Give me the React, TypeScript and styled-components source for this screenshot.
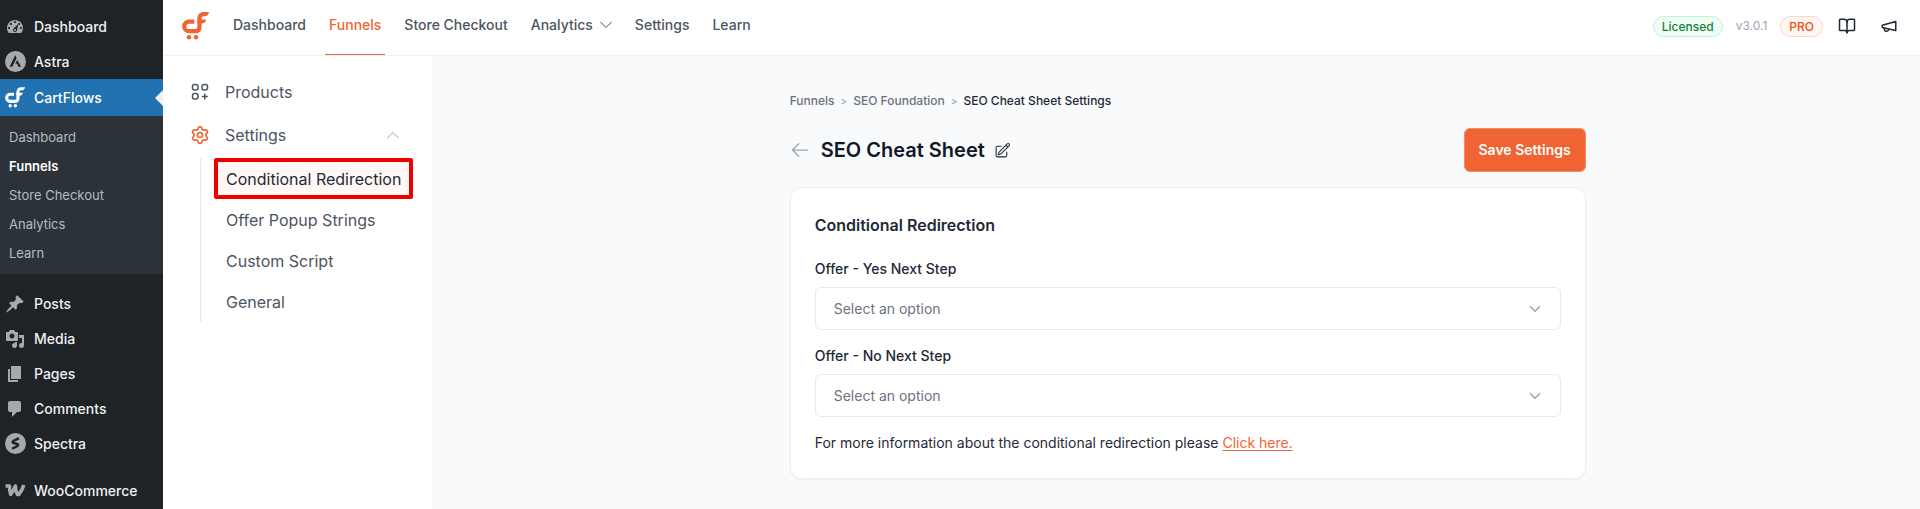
import React from 'react';
import styled, { createGlobalStyle } from 'styled-components';
import { BookOpen, ChevronDown, Settings } from 'lucide-react';
import { HiOutlineArrowLeft, HiOutlinePencilSquare } from 'react-icons/hi2';

const GlobalStyle = createGlobalStyle`
  *, *::before, *::after { box-sizing: border-box; }
  body {
    margin: 0;
    background: #f9fafb;
    color: #1f2937;
    font-family: Inter, "Liberation Sans", sans-serif;
    font-size: 14px;
    line-height: 20px;
  }
  a { color: inherit; text-decoration: none; }
  ul, ol { list-style: none; margin: 0; padding: 0; }
  h1, h2, p { margin: 0; }
  button, select { font: inherit; }
  svg { display: block; flex-shrink: 0; }
`;

const Shell = styled.div`
  display: flex;
  min-height: 100vh;
`;

/* Admin menu */

const AdminMenu = styled.nav`
  flex: 0 0 163px;
  padding-top: 9px;
  background: #1d2327;
  color: #f0f0f1;
`;

const AdminGroup = styled.ul`
  & + & { margin-top: 12px; }
`;

const AdminLink = styled.a<{ $active?: boolean }>`
  display: flex;
  align-items: center;
  gap: 8px;
  height: ${({ $active }) => ($active ? 37 : 35)}px;
  padding-left: 4px;
  position: relative;
  font-weight: 500;
  color: ${({ $active }) => ($active ? '#fff' : '#f0f0f1')};
  background: ${({ $active }) => ($active ? '#2271b1' : 'transparent')};

  &::after {
    content: '';
    display: ${({ $active }) => ($active ? 'block' : 'none')};
    position: absolute;
    right: 0;
    top: 50%;
    margin-top: -8px;
    border: 8px solid transparent;
    border-left-width: 0;
    border-right-color: #f0f0f1;
  }
`;

const AdminIcon = styled.span<{ $active?: boolean }>`
  display: flex;
  justify-content: center;
  width: 22px;
  color: ${({ $active }) => ($active ? '#fff' : '#a7aaad')};
`;

const AdminSubmenu = styled.ul`
  padding: 6px 0 7px;
  background: #2c3338;
`;

const AdminSubLink = styled.a<{ $active?: boolean }>`
  display: flex;
  align-items: center;
  height: 29px;
  padding-left: 9px;
  font-size: 13px;
  font-weight: ${({ $active }) => ($active ? 600 : 400)};
  color: ${({ $active }) => ($active ? '#fff' : '#b5bcc2')};
`;

/* App header */

const AppColumn = styled.div`
  flex: 1;
  min-width: 0;
  display: flex;
  flex-direction: column;
`;

const Header = styled.header`
  display: flex;
  align-items: flex-start;
  height: 56px;
  padding: 0 22px 0 19px;
  background: #fff;
  border-bottom: 1px solid #eef0f2;
`;

const Brand = styled.a`
  padding-top: 12px;
  color: #f06434;
`;

const TopNav = styled.nav`
  display: flex;
  gap: 15px;
  margin-left: 20px;
`;

const TopLink = styled.a<{ $active?: boolean }>`
  display: flex;
  align-items: center;
  gap: 7px;
  height: 55px;
  padding: 0 4px 4px;
  font-weight: 500;
  color: ${({ $active }) => ($active ? '#f06434' : '#4b5563')};
  border-bottom: 1px solid ${({ $active }) => ($active ? '#f06434' : 'transparent')};
`;

const Status = styled.div`
  display: flex;
  align-items: center;
  gap: 13px;
  height: 52px;
  margin-left: auto;
`;

const Pill = styled.span<{ $tone: 'green' | 'orange' }>`
  height: 21px;
  padding: 0 8px;
  border: 1px solid ${({ $tone }) => ($tone === 'green' ? '#bbf7d0' : '#fbd5c8')};
  border-radius: 11px;
  background: ${({ $tone }) => ($tone === 'green' ? '#f0fdf4' : '#fff7f3')};
  color: ${({ $tone }) => ($tone === 'green' ? '#15803d' : '#f0501a')};
  font-size: 12px;
  line-height: 19px;
  font-weight: 500;
`;

const Version = styled.span`
  font-size: 12px;
  color: #9ca3af;
`;

const HeaderActions = styled.div`
  display: flex;
  align-items: center;
  gap: 24px;
  margin-left: 2px;
`;

const IconButton = styled.button`
  display: flex;
  padding: 0;
  border: 0;
  background: none;
  color: inherit;
  cursor: pointer;
`;

/* Funnel side navigation */

const Body = styled.div`
  flex: 1;
  display: flex;
`;

const SideNav = styled.nav`
  flex: 0 0 269px;
  padding: 14px 19px 0 27px;
  background: #fff;
  font-size: 16px;
  color: #4b5563;
`;

const SideLink = styled.a<{ $accent?: boolean }>`
  display: flex;
  align-items: center;
  gap: 15px;
  height: 43px;
  padding-right: 14px;

  & > svg:first-child { color: ${({ $accent }) => ($accent ? '#f06434' : '#4b5563')}; }
  & > svg:last-child:not(:first-child) { margin-left: auto; color: #9ca3af; }
`;

const SideSublist = styled.ul`
  margin: 2px 0 0 10px;
  padding-left: 13px;
  border-left: 1px solid #e5e7eb;
`;

const SideSublink = styled.a<{ $active?: boolean }>`
  display: flex;
  align-items: center;
  height: 41px;
  padding: 0 8px;
  border: 4px solid ${({ $active }) => ($active ? '#ee0000' : 'transparent')};
  border-radius: 2px;
  background: ${({ $active }) => ($active ? '#fff8f5' : 'transparent')};
  color: ${({ $active }) => ($active ? '#1f2937' : 'inherit')};
  white-space: nowrap;
`;

/* Settings page */

const Main = styled.main`
  flex: 1;
  min-width: 0;
  padding: 35px 24px 28px 47px;
`;

const Container = styled.div`
  max-width: 796px;
  margin: 0 auto;
`;

const Crumbs = styled.ol`
  display: flex;
  gap: 6px;
  font-size: 12px;
  font-weight: 500;
  color: #6b7280;

  li { display: flex; gap: 6px; }
  li + li::before { content: '>'; font-size: 10px; color: #9ca3af; }
  [aria-current] { color: #1f2937; }
`;

const TitleBar = styled.div`
  display: flex;
  align-items: center;
  margin: 17px 0 15px;
`;

const BackLink = styled.a`
  margin-right: 11px;
  color: #9ca3af;
`;

const Title = styled.h1`
  margin-right: 9px;
  font-size: 20px;
  line-height: 28px;
  font-weight: 600;
  color: #111827;
`;

const SaveButton = styled.button`
  height: 44px;
  margin-left: auto;
  padding: 0 14px;
  border: 1px solid #f58a66;
  border-radius: 6px;
  background: #f06434;
  color: #fff;
  font-weight: 600;
  cursor: pointer;
`;

const Card = styled.section`
  padding: 25px 24px;
  border: 1px solid #eceef1;
  border-radius: 12px;
  background: #fff;
  box-shadow: 0 1px 2px rgba(0, 0, 0, 0.05);
`;

const CardTitle = styled.h2`
  margin-bottom: 22px;
  font-size: 16px;
  line-height: 24px;
  font-weight: 600;
`;

const Field = styled.div`
  margin-bottom: 16px;
`;

const Label = styled.label`
  display: block;
  margin-bottom: 8px;
  font-weight: 500;
`;

const SelectBox = styled.div`
  display: grid;
  align-items: center;

  & > * { grid-area: 1 / 1; }
  & > svg { justify-self: end; margin-right: 17px; color: #9ca3af; pointer-events: none; }
`;

const Select = styled.select`
  appearance: none;
  width: 100%;
  height: 43px;
  padding: 0 40px 0 18px;
  border: 1px solid #e8eaee;
  border-radius: 6px;
  background: #fff;
  color: #6b7280;
`;

const Note = styled.p`
  a { color: #f06434; text-decoration: underline; text-underline-offset: 2px; }
`;

const CartFlowsMark = ({ width, height }: { width: number; height: number }) => (
  <svg width={width} height={height} viewBox="0 0 27 28" fill="none" aria-hidden="true">
    <path
      d="M12.3 9.6H7A4.8 4.8 0 0 0 7 19.2h6.2c2.8 0 4.3-1.5 4.3-4.2V7.6"
      stroke="currentColor"
      strokeWidth="4.2"
    />
    <path
      d="M15.4 10.6V6.8C15.4 2.6 18 0 22.2 0H27c-.4 2.8-2 4.2-4.6 4.2h-.6c-1.5 0-2.2.8-2.2 2.2v1.2H24c-.3 2.6-1.7 4-4.4 4Z"
      fill="currentColor"
    />
    <circle cx="7" cy="25.2" r="2.3" fill="currentColor" />
    <circle cx="14" cy="25.2" r="2.3" fill="currentColor" />
  </svg>
);

const DASHICONS = {
  dashboard:
    'M3.76 16h12.48c1.1-1.37 1.76-3.11 1.76-5 0-4.42-3.58-8-8-8s-8 3.58-8 8c0 1.89.66 3.63 1.76 5zM10 4c.55 0 1 .45 1 1s-.45 1-1 1-1-.45-1-1 .45-1 1-1zM6 6c.55 0 1 .45 1 1s-.45 1-1 1-1-.45-1-1 .45-1 1-1zm8 0c.55 0 1 .45 1 1s-.45 1-1 1-1-.45-1-1 .45-1 1-1zM13.5 6.8l-1.5 6.2c0 1.1-.9 2-2 2s-2-.9-2-2c0-.6.25-1.1.63-1.45zM4 10c.55 0 1 .45 1 1s-.45 1-1 1-1-.45-1-1 .45-1 1-1zm12 0c.55 0 1 .45 1 1s-.45 1-1 1-1-.45-1-1 .45-1 1-1zm-5 3c0-.55-.45-1-1-1s-1 .45-1 1 .45 1 1 1 1-.45 1-1z',
  posts:
    'M10.44 3.02l1.82-1.82 6.36 6.35-1.83 1.82c-1.05-.68-2.48-.57-3.41.36l-.75.75c-.92.93-1.04 2.35-.35 3.41l-1.83 1.82-2.41-2.41-2.8 2.79c-.42.42-3.38 2.71-3.8 2.29s1.86-3.39 2.28-3.81l2.79-2.79L4.1 9.36l1.83-1.82c1.05.69 2.48.57 3.4-.36l.75-.75c.93-.92 1.05-2.35.36-3.41z',
  media:
    'M13 11V4c0-.55-.45-1-1-1h-1.67L9 1H5L3.67 3H2c-.55 0-1 .45-1 1v7c0 .55.45 1 1 1h10c.55 0 1-.45 1-1zM7 4.5c1.38 0 2.5 1.12 2.5 2.5S8.38 9.5 7 9.5 4.5 8.38 4.5 7 5.62 4.5 7 4.5zM14 6h5v10.5c0 1.38-1.12 2.5-2.5 2.5S14 17.88 14 16.5s1.12-2.5 2.5-2.5c.17 0 .34.02.5.05V9h-3V6zm-4 8.05V13h2v3.5c0 1.38-1.12 2.5-2.5 2.5S7 17.88 7 16.5 8.12 14 9.5 14c.17 0 .34.02.5.05z',
  pages: 'M6 15V2h10v13H6zm-1 1h8v2H3V5h2v11z',
  comments: 'M5 2h9c1.1 0 2 .9 2 2v7c0 1.1-.9 2-2 2h-2l-5 5v-5H5c-1.1 0-2-.9-2-2V4c0-1.1.9-2 2-2z',
};

const Dashicon = ({ name }: { name: keyof typeof DASHICONS }) => (
  <svg width="20" height="20" viewBox="0 0 20 20" aria-hidden="true">
    <path d={DASHICONS[name]} fill="currentColor" fillRule="evenodd" />
  </svg>
);

const AstraIcon = () => (
  <svg width="21" height="21" viewBox="0 0 20 20" aria-hidden="true">
    <circle cx="10" cy="10" r="10" fill="currentColor" />
    <path d="M9.8 3.8 4.4 15h2.5L11 6.8zM11.6 8.6 9.8 12.2h1.7l1.3 2.8h2.6z" fill="#1d2327" />
  </svg>
);

const SpectraIcon = () => (
  <svg width="21" height="21" viewBox="0 0 20 20" fill="none" aria-hidden="true">
    <circle cx="10" cy="10" r="10" fill="currentColor" />
    <path d="M13.2 5 8 7.6q-1.4.9 0 1.8l3.8 1.2q1.4.8 0 1.8l-5 2.6" stroke="#1d2327" strokeWidth="2.4" />
  </svg>
);

const WooIcon = () => (
  <svg width="21" height="13" viewBox="0 0 21 13" fill="none" aria-hidden="true">
    <path
      d="M.5 2h4q0 5 1.2 8.400Q8.600 7 10.400 2q0 5 2 8.400h1.400Q17 7 18.800 1"
      stroke="currentColor"
      strokeWidth="3.600"
      strokeLinejoin="round"
    />
  </svg>
);

const ProductsIcon = () => (
  <svg width="20" height="20" viewBox="0 0 20 20" fill="none" stroke="currentColor" strokeWidth="1.5" aria-hidden="true">
    <rect x="2.5" y="2.5" width="5.5" height="5.5" rx="2" />
    <rect x="12" y="2.5" width="5.5" height="5.5" rx="2" />
    <rect x="2.5" y="11.5" width="5.5" height="5.5" rx="2" />
    <path d="M14.8 11.5v6M11.8 14.5h6" />
  </svg>
);

const ThinChevron = ({ up }: { up?: boolean }) => (
  <svg width="12" height="8" viewBox="0 0 12 8" fill="none" stroke="currentColor" aria-hidden="true">
    <path d={up ? 'M.5 7 6 1.5 11.5 7' : 'M.5 1 6 6.5 11.5 1'} strokeLinecap="round" />
  </svg>
);

const MegaphoneIcon = () => (
  <svg
    width="18"
    height="18"
    viewBox="0 0 24 24"
    fill="none"
    stroke="currentColor"
    strokeWidth="2"
    strokeLinecap="round"
    strokeLinejoin="round"
    aria-hidden="true"
  >
    <path d="m3 11 18-5v12L3 14v-3z" />
    <path d="M11.6 16.8a3 3 0 1 1-5.8-1.6" />
  </svg>
);

const SelectField = ({ id, label }: { id: string; label: string }) => (
  <Field>
    <Label htmlFor={id}>{label}</Label>
    <SelectBox>
      <Select id={id} defaultValue="">
        <option value="">Select an option</option>
      </Select>
      <ChevronDown size={18} />
    </SelectBox>
  </Field>
);

const AdminItem = ({ icon, label }: { icon: React.ReactNode; label: string }) => (
  <li>
    <AdminLink href="#">
      <AdminIcon>{icon}</AdminIcon>
      {label}
    </AdminLink>
  </li>
);

const CARTFLOWS_PAGES = ['Dashboard', 'Funnels', 'Store Checkout', 'Analytics', 'Learn'];
const TOP_LINKS = ['Dashboard', 'Funnels', 'Store Checkout', 'Analytics', 'Settings', 'Learn'];
const SETTINGS_LINKS = ['Conditional Redirection', 'Offer Popup Strings', 'Custom Script', 'General'];

export default function App() {
  return (
    <>
      <GlobalStyle />
      <Shell>
        <AdminMenu aria-label="Admin menu">
          <AdminGroup>
            <AdminItem icon={<Dashicon name="dashboard" />} label="Dashboard" />
            <AdminItem icon={<AstraIcon />} label="Astra" />
            <li>
              <AdminLink href="#" $active>
                <AdminIcon $active>
                  <CartFlowsMark width={20} height={21} />
                </AdminIcon>
                CartFlows
              </AdminLink>
              <AdminSubmenu>
                {CARTFLOWS_PAGES.map((page) => (
                  <li key={page}>
                    <AdminSubLink href="#" $active={page === 'Funnels'}>
                      {page}
                    </AdminSubLink>
                  </li>
                ))}
              </AdminSubmenu>
            </li>
          </AdminGroup>
          <AdminGroup>
            <AdminItem icon={<Dashicon name="posts" />} label="Posts" />
            <AdminItem icon={<Dashicon name="media" />} label="Media" />
            <AdminItem icon={<Dashicon name="pages" />} label="Pages" />
            <AdminItem icon={<Dashicon name="comments" />} label="Comments" />
            <AdminItem icon={<SpectraIcon />} label="Spectra" />
          </AdminGroup>
          <AdminGroup>
            <AdminItem icon={<WooIcon />} label="WooCommerce" />
          </AdminGroup>
        </AdminMenu>

        <AppColumn>
          <Header>
            <Brand href="#" aria-label="CartFlows">
              <CartFlowsMark width={27} height={28} />
            </Brand>
            <TopNav aria-label="CartFlows">
              {TOP_LINKS.map((link) => (
                <TopLink key={link} href="#" $active={link === 'Funnels'}>
                  {link}
                  {link === 'Analytics' && <ThinChevron />}
                </TopLink>
              ))}
            </TopNav>
            <Status>
              <Pill $tone="green">Licensed</Pill>
              <Version>v3.0.1</Version>
              <Pill $tone="orange">PRO</Pill>
              <HeaderActions>
                <IconButton type="button" aria-label="Documentation">
                  <BookOpen size={18} />
                </IconButton>
                <IconButton type="button" aria-label="What's new">
                  <MegaphoneIcon />
                </IconButton>
              </HeaderActions>
            </Status>
          </Header>

          <Body>
            <SideNav aria-label="Funnel">
              <SideLink href="#">
                <ProductsIcon />
                Products
              </SideLink>
              <SideLink href="#" $accent>
                <Settings size={20} strokeWidth={2} />
                Settings
                <ThinChevron up />
              </SideLink>
              <SideSublist>
                {SETTINGS_LINKS.map((link, index) => (
                  <li key={link}>
                    <SideSublink href="#" $active={index === 0}>
                      {link}
                    </SideSublink>
                  </li>
                ))}
              </SideSublist>
            </SideNav>

            <Main>
              <Container>
                <nav aria-label="Breadcrumb">
                  <Crumbs>
                    <li>
                      <a href="#">Funnels</a>
                    </li>
                    <li>
                      <a href="#">SEO Foundation</a>
                    </li>
                    <li>
                      <span aria-current="page">SEO Cheat Sheet Settings</span>
                    </li>
                  </Crumbs>
                </nav>
                <TitleBar>
                  <BackLink href="#" aria-label="Back">
                    <HiOutlineArrowLeft size={20} />
                  </BackLink>
                  <Title>SEO Cheat Sheet</Title>
                  <IconButton type="button" aria-label="Rename funnel">
                    <HiOutlinePencilSquare size={17} />
                  </IconButton>
                  <SaveButton type="submit">Save Settings</SaveButton>
                </TitleBar>
                <Card>
                  <CardTitle>Conditional Redirection</CardTitle>
                  <SelectField id="offer-yes" label="Offer - Yes Next Step" />
                  <SelectField id="offer-no" label="Offer - No Next Step" />
                  <Note>
                    For more information about the conditional redirection please <a href="#">Click here.</a>
                  </Note>
                </Card>
              </Container>
            </Main>
          </Body>
        </AppColumn>
      </Shell>
    </>
  );
}
